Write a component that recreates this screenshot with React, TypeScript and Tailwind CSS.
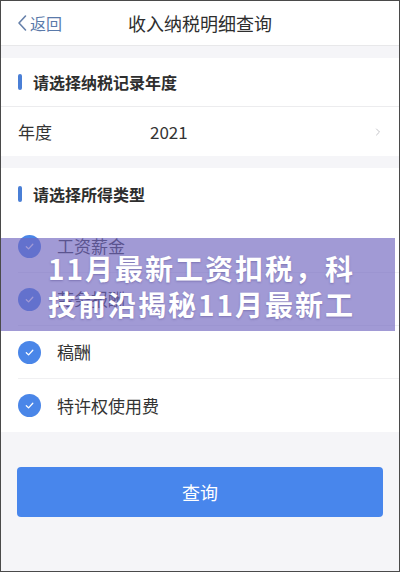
import { ChevronRight } from "lucide-react";

const font = { fontFamily: '"Noto Sans CJK SC", "Noto Sans", sans-serif' };

const incomeTypes = ["工资薪金", "劳务报酬", "稿酬", "特许权使用费"];

function CheckDot() {
    return (
        <span className="flex items-center justify-center w-[23px] h-[23px] rounded-full bg-[#4a86e8] shrink-0">
            <svg width="11" height="11" viewBox="0 0 12 12" fill="none">
                <path
                    d="M2.5 6.2 L5 8.6 L9.6 3.6"
                    stroke="#ffffff"
                    strokeWidth="1.4"
                    strokeLinecap="round"
                    strokeLinejoin="round"
                />
            </svg>
        </span>
    );
}

function SectionTitle({ text }: { text: string }) {
    return (
        <div className="flex items-center gap-[11px] pl-[17px]">
            <span className="w-[4px] h-[16px] rounded-full bg-[#4a7fd6]" />
            <span className="text-[16px] font-bold text-[#2e2e2e]">{text}</span>
        </div>
    );
}

export default function App() {
    return (
        <div
            className="relative w-[400px] h-[572px] overflow-hidden border border-[#4a4a4a] bg-[#f5f5f8] flex flex-col"
            style={font}
        >
            {/* top bar */}
            <div className="h-[45px] bg-white border-b border-[#e8e8ea] grid grid-cols-[1fr_auto_1fr] items-center shrink-0">
                <div className="flex items-center pl-[15px] text-[#5a7aaa]">
                    <svg width="12" height="18" viewBox="0 0 12 18" fill="none">
                        <path
                            d="M9.5 2 L3 9 L9.5 16"
                            stroke="#6680aa"
                            strokeWidth="1.6"
                            strokeLinecap="round"
                            strokeLinejoin="round"
                        />
                    </svg>
                    <span className="text-[16px] ml-[2px]">返回</span>
                </div>
                <div className="text-[18px] text-[#2e2e2e]">收入纳税明细查询</div>
                <div />
            </div>

            <div className="h-[12px] shrink-0" />

            {/* year */}
            <div className="bg-white shrink-0">
                <div className="h-[49px] flex items-center border-b border-[#ececee]">
                    <SectionTitle text="请选择纳税记录年度" />
                </div>
                <div className="h-[49px] flex items-center pl-[17px] pr-[15px] text-[17px] text-[#333]">
                    <span className="w-[132px]">年度</span>
                    <span className="flex-1">2021</span>
                    <ChevronRight size={12} strokeWidth={2} className="text-[#c4c4c8]" />
                </div>
            </div>

            <div className="h-[12px] shrink-0" />

            {/* income types */}
            <div className="bg-white shrink-0">
                <div className="h-[52px] flex items-center">
                    <SectionTitle text="请选择所得类型" />
                </div>
                {incomeTypes.map((t, i) => (
                    <div
                        key={t}
                        className={`h-[53px] ml-[17px] flex items-center gap-[16px] ${
                            i < incomeTypes.length - 1 ? "border-b border-[#f0f0f2]" : ""
                        }`}
                    >
                        <CheckDot />
                        <span className="text-[17px] text-[#333]">{t}</span>
                    </div>
                ))}
            </div>

            <div className="px-[16px] pt-[35px]">
                <button className="w-full h-[50px] rounded-[4px] bg-[#4886ec] text-white text-[18px]">
                    查询
                </button>
            </div>

            {/* headline banner */}
            <div className="absolute left-0 right-[4px] top-[237px] h-[93px] bg-[rgba(112,102,192,0.66)] pl-[47px] pt-[12px]">
                <div
                    className="w-[322px] h-[72px] overflow-hidden text-white font-bold text-[28px] leading-[36px] tracking-[2px]"
                    style={{ textShadow: "0 1px 2px rgba(60,50,120,0.35)" }}
                >
                    11月最新工资扣税，科技前沿揭秘11月最新工资扣税新规解读
                </div>
            </div>
        </div>
    );
}
